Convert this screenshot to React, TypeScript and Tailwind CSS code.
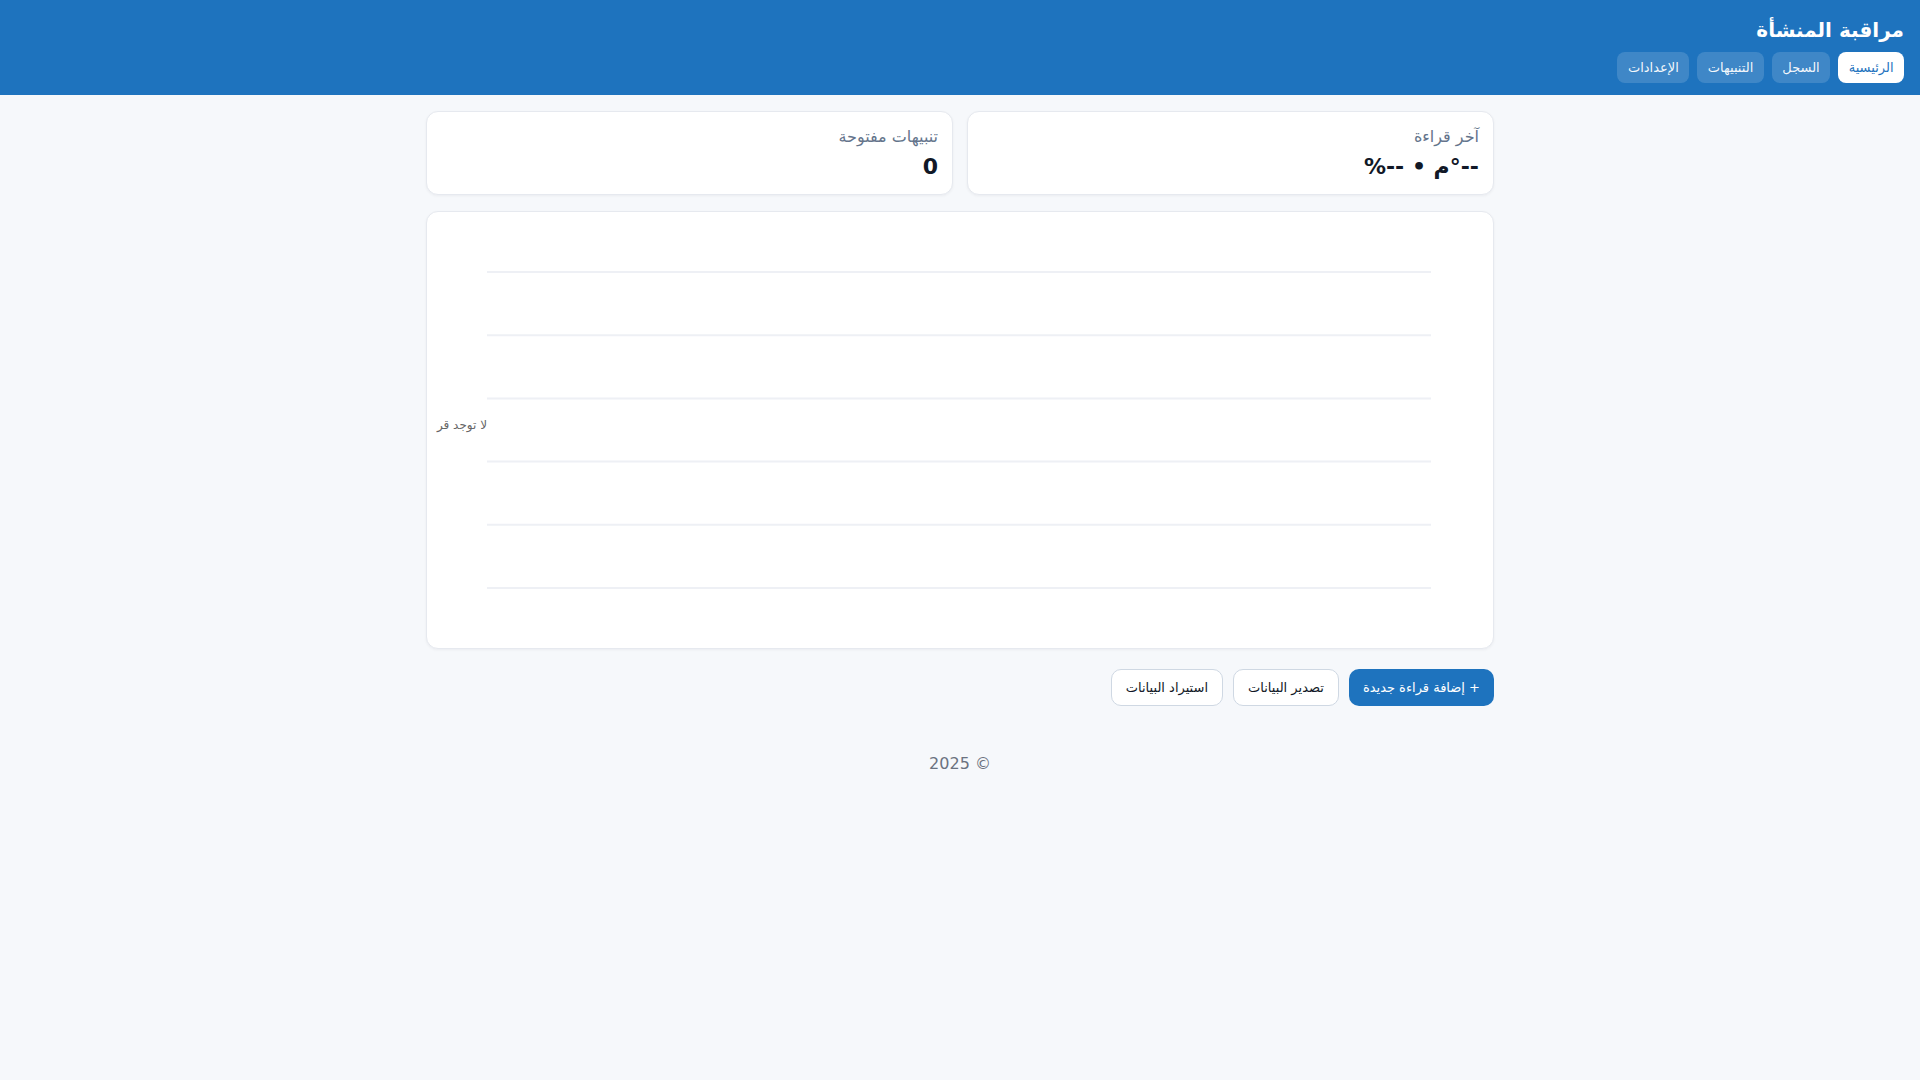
import React from "react";

const font = { fontFamily: '"DejaVu Sans", "Noto Sans", sans-serif' };

function NavButton({ label, active }: { label: string; active?: boolean }) {
  return (
    <button
      className={
        active
          ? "h-[31px] px-[10.5px] rounded-lg bg-white text-[#1e73be] text-[13px] leading-5"
          : "h-[31px] px-[10.5px] rounded-lg bg-white/15 text-white/95 text-[13px] leading-5"
      }
    >
      {label}
    </button>
  );
}

function StatCard({ label, value }: { label: string; value: string }) {
  return (
    <div className="flex-1 rounded-xl border border-[#e6e9ef] bg-white px-[14px] pt-[14px] pb-[13px] shadow-[0_1px_3px_rgba(15,23,42,0.05)]">
      <div className="text-[16px] leading-[22px] text-[#64748b]">{label}</div>
      <div className="mt-[5px] text-[22px] leading-7 font-bold text-[#111827]">{value}</div>
    </div>
  );
}

function Chart() {
  const ys = [60, 123.2, 186.4, 249.6, 312.8, 376];
  return (
    <svg width="100%" height="436" viewBox="0 0 1064 436" className="block" direction="ltr">
      {ys.map((y) => (
        <line key={y} x1="59" x2="1003" y1={y} y2={y} stroke="#eef0f5" strokeWidth="2" />
      ))}
      <text
        x="59"
        y="217"
        textAnchor="end"
        fontSize="12"
        fill="#666666"
        fontFamily='"DejaVu Sans", sans-serif'
      >
        لا توجد قر
      </text>
    </svg>
  );
}

export default function App() {
  return (
    <div dir="rtl" style={font} className="min-h-screen bg-[#f6f8fb] text-[#111827]">
      <header className="bg-[#1e73be] px-4 pt-4 pb-3">
        <h1 className="text-[20px] leading-7 font-bold text-white">مراقبة المنشأة</h1>
        <nav className="mt-2 flex gap-2">
          <NavButton label="الرئيسية" active />
          <NavButton label="السجل" />
          <NavButton label="التنبيهات" />
          <NavButton label="الإعدادات" />
        </nav>
      </header>

      <main className="mx-auto max-w-[1100px] px-4 pt-4 pb-[22px]">
        <div className="flex gap-[14px]">
          <StatCard label="آخر قراءة" value="--°م • --%" />
          <StatCard label="تنبيهات مفتوحة" value="0" />
        </div>

        <div className="mt-4 rounded-xl border border-[#e6e9ef] bg-white shadow-[0_1px_3px_rgba(15,23,42,0.05)]">
          <Chart />
        </div>

        <div className="mt-5 flex gap-2.5">
          <button className="h-[37px] px-[14px] rounded-[10px] bg-[#1e73be] text-white text-[13px]">
            + إضافة قراءة جديدة
          </button>
          <button className="h-[37px] px-[14px] rounded-[10px] border border-[#cfd8e3] bg-white text-[#111827] text-[13px]">
            تصدير البيانات
          </button>
          <button className="h-[37px] px-[14px] rounded-[10px] border border-[#cfd8e3] bg-white text-[#111827] text-[13px]">
            استيراد البيانات
          </button>
        </div>
      </main>

      <footer className="pt-6 pb-6 text-center text-[16px] leading-6 text-[#6b7280]">© 2025</footer>
    </div>
  );
}
